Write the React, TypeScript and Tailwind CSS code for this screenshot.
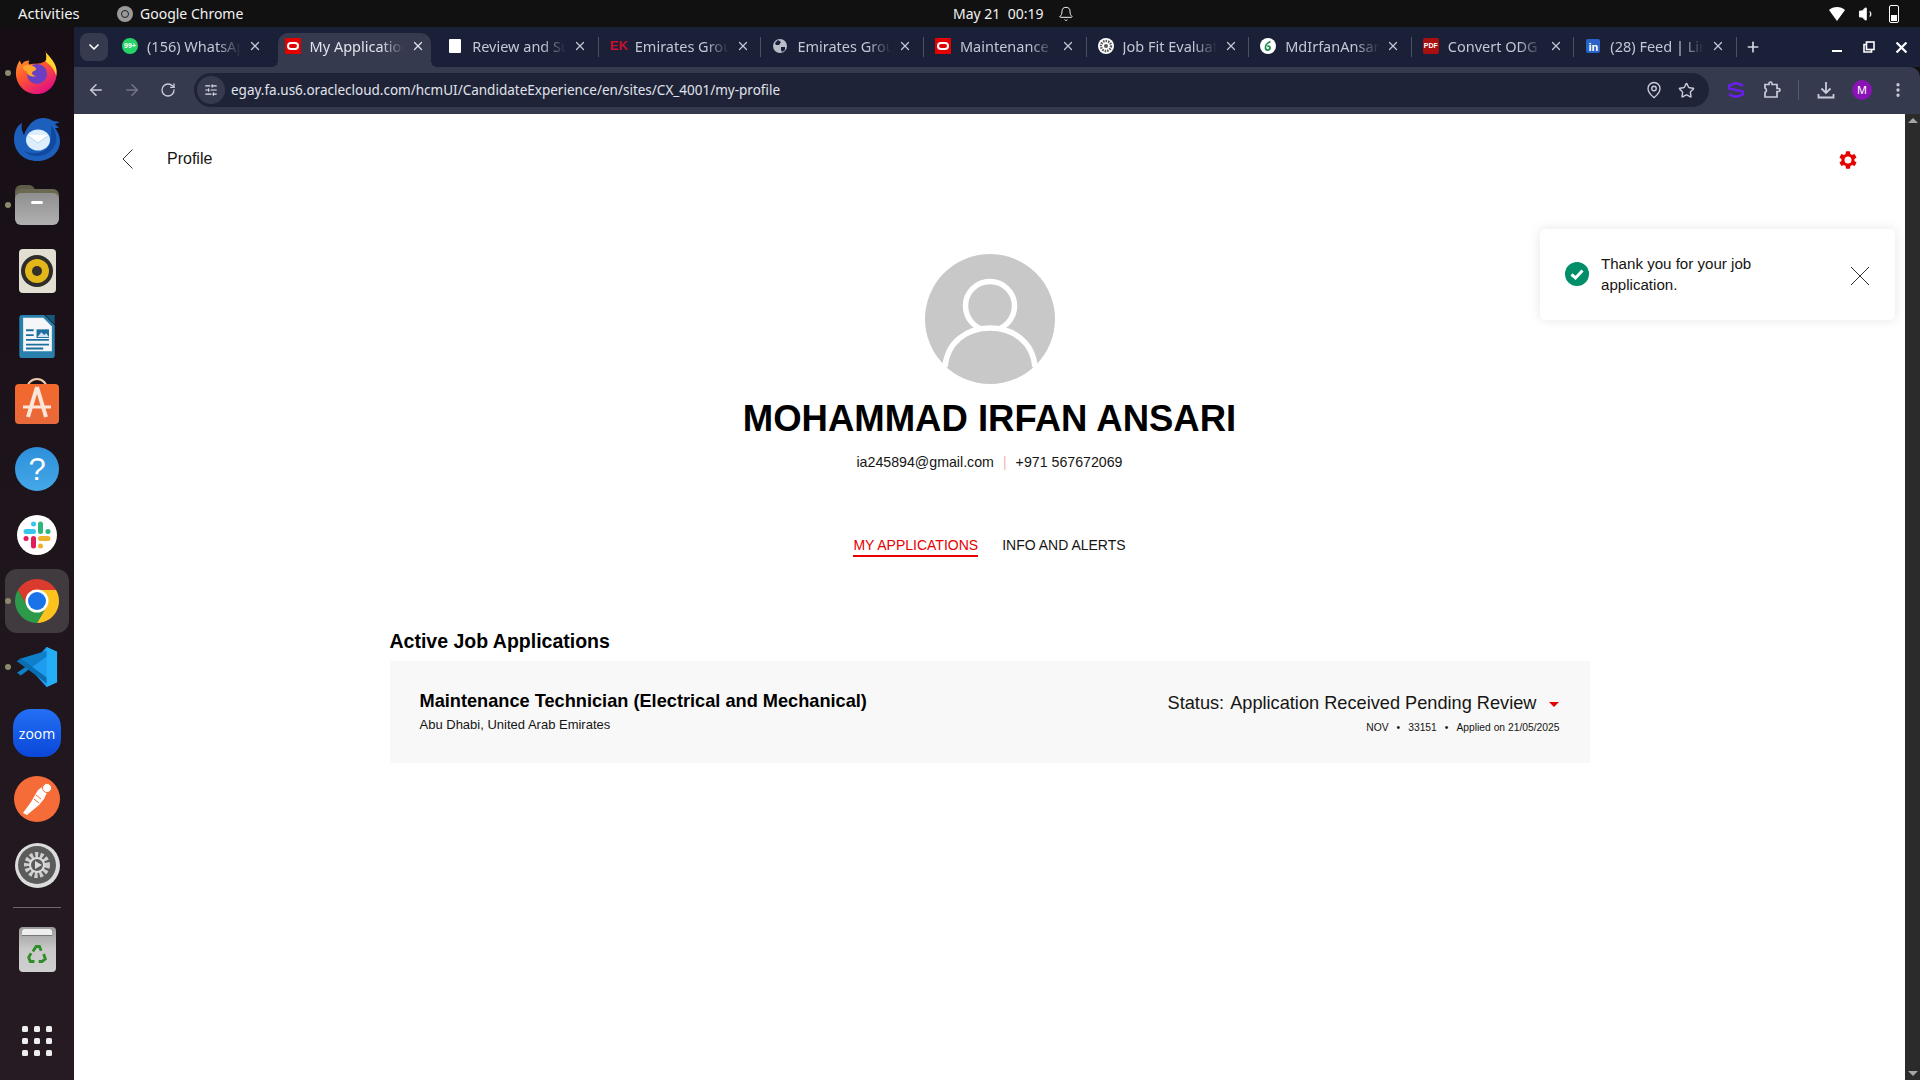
import { ReactNode } from "react"
import { X, Plus, ChevronDown, ArrowLeft, ArrowRight, RotateCw, MapPin, Star, EllipsisVertical, SlidersHorizontal, Bell, Volume1 } from "lucide-react"

const ubuntu = "[font-family:'Noto_Sans',sans-serif]"

const OracleIcon = () => (
    <div className="w-4 h-4 bg-[#e30000] flex items-center justify-center">
        <div className="w-3 h-2 rounded-full border-2 border-white" />
    </div>
)

const tabs: { title: string; icon: ReactNode; active?: boolean; noSep?: boolean }[] = [
    {
        title: "(156) WhatsApp",
        noSep: true,
        icon: (
            <div className="w-4 h-4 rounded-full bg-[#25d366] flex items-center justify-center text-[7px] font-bold text-white leading-none [font-family:'Liberation_Sans',sans-serif]">99+</div>
        ),
    },
    { title: "My Applications", icon: <OracleIcon />, active: true },
    { title: "Review and Submit", icon: <div className="w-3 h-3.5 mx-0.5 bg-white rounded-[1px]" /> },
    { title: "Emirates Group", icon: <div className="w-4 text-[13px] font-bold text-[#c8102e] leading-none [font-family:'Liberation_Sans',sans-serif]">EK</div> },
    {
        title: "Emirates Group",
        icon: (
            <svg viewBox="0 0 16 16" className="w-4 h-4">
                <circle cx="8" cy="8" r="7" fill="#b9bcc9" />
                <path d="M6 2 9 4 7 7 4 7 3 5ZM9 9l4 0 0 3-3 2-1-2Z" fill="#1a2038" />
            </svg>
        ),
    },
    { title: "Maintenance Technician", icon: <OracleIcon /> },
    {
        title: "Job Fit Evaluation",
        icon: (
            <svg viewBox="0 0 16 16" className="w-4 h-4">
                <circle cx="8" cy="8" r="8" fill="#fff" />
                <circle cx="8" cy="8" r="5" fill="none" stroke="#555" strokeWidth="2.4" strokeDasharray="1.5 1" />
                <circle cx="8" cy="8" r="2" fill="#555" />
            </svg>
        ),
    },
    {
        title: "MdIrfanAnsari",
        icon: (
            <svg viewBox="0 0 16 16" className="w-4 h-4">
                <circle cx="8" cy="8" r="8" fill="#fff" />
                <path d="M10.5 3.5C7 5 5 8 5.5 10.5c.4 2 3.6 2 4.4.2.6-1.6-.6-3-2.6-2.4" fill="none" stroke="#1f8a4c" strokeWidth="1.8" />
            </svg>
        ),
    },
    {
        title: "Convert ODG to PDF",
        icon: <div className="w-4 h-4 rounded-[2px] bg-[#a80f0f] flex items-center justify-center text-[7px] font-bold text-white leading-none [font-family:'Liberation_Sans',sans-serif]">PDF</div>,
    },
    {
        title: "(28) Feed | LinkedIn",
        icon: <div className="w-3.5 h-3.5 mx-px rounded-[2px] bg-[#2a62c9] flex items-end justify-center text-[11px] font-bold text-white leading-none [font-family:'Liberation_Sans',sans-serif]">in</div>,
    },
]

function Tab({ title, icon, active, noSep }: { title: string; icon: ReactNode; active?: boolean; noSep?: boolean }) {
    return (
        <div className={`relative h-[34px] shrink-0 flex items-center pl-[7px] pb-[9px] rounded-t-[10px] ${active ? "w-[153.6px] mr-[9px] bg-[#363a4f] text-[#e1e3ec]" : "w-[162.6px] text-[#c3c6d4]"}`}>
            <div className="w-4 h-4 shrink-0 flex items-center justify-center">{icon}</div>
            <div className="ml-[9px] w-[94px] shrink-0 overflow-hidden whitespace-nowrap text-[14.5px] leading-[20px] [mask-image:linear-gradient(to_right,black_75%,transparent)]">{title}</div>
            <X className="ml-[7px] w-3.5 h-3.5 shrink-0" strokeWidth={2.2} />
            {!active && !noSep && <div className="absolute right-[4px] top-[4px] h-[20px] w-px bg-[#4c5064]" />}
            {active && <div className="absolute -left-[6px] bottom-0 w-[6px] h-[6px] bg-[radial-gradient(circle_at_0_0,transparent_6px,#363a4f_6px)]" />}
            {active && <div className="absolute -right-[6px] bottom-0 w-[6px] h-[6px] bg-[radial-gradient(circle_at_100%_0,transparent_6px,#363a4f_6px)]" />}
        </div>
    )
}

function DockCell({ children, dot, active }: { children: ReactNode; dot?: boolean; active?: boolean }) {
    return (
        <div className="relative h-[66px] flex items-center justify-center">
            {active && <div className="absolute left-[5px] top-[1px] w-16 h-16 rounded-xl bg-[#413a3f]" />}
            {dot && <div className="absolute left-[5px] top-[30px] w-[6px] h-[6px] rounded-full bg-[#8a8a6c]" />}
            <div className="relative">{children}</div>
        </div>
    )
}

const Firefox = () => (
    <svg viewBox="0 0 48 48" className="w-[46px] h-[46px]">
        <defs>
            <linearGradient id="ff" x1="0" y1="0" x2="0.6" y2="1">
                <stop offset="0" stopColor="#ffb52e" />
                <stop offset="0.5" stopColor="#ff5a2c" />
                <stop offset="1" stopColor="#e3127f" />
            </linearGradient>
        </defs>
        <path d="M33 2c2 5 9 8 11 17 3 14-7 27-20 27C11 46 2 36 2 24c0-6 2-10 4-13l2 4c2-3 5-4 8-4-1 2-1 3 0 4 6-1 14 0 17-4 2-3 1-6 0-10Z" fill="url(#ff)" />
        <path d="M33 2c3 4 9 9 11 17 .6 3 .5 6 0 8-2-8-7-12-11-15 1-3 1-7 0-10Z" fill="#ffd52e" />
        <circle cx="24" cy="25" r="10.5" fill="#6b3fc4" />
        <path d="M9 18c4-4 9-3 13 0 2 2 1 3-1 4-4 1-2 5 2 5-5 2-10-1-10-5-2 0-3-2-4-4Z" fill="#ffa52e" />
    </svg>
)

const Thunderbird = () => (
    <svg viewBox="0 0 48 48" className="w-[48px] h-[48px]">
        <path d="M24 46C11 46 1 37 1 24 1 16 5 10 9 8c-1 5 0 9 2 12C14 11 21 2 31 3c5 .4 8 2 9 3l7 1-5 2 4 4-4 0c3 4 5 8 5 13 0 12-10 20-23 20Z" fill="#1c5fbd" />
        <path d="M38 10c4 5 6 10 5 17-2 8-9 14-19 14-6 0-10-2-13-5 3 1 6 2 11 2 9 0 16-6 16-14 0-6 0-10 0-14Z" fill="#0f4aa0" />
        <ellipse cx="25" cy="25" rx="12" ry="10.5" fill="#dcedfb" />
        <path d="M14 20 25 28 36 20" fill="#fff" stroke="#b5d6f2" strokeWidth="1" />
    </svg>
)

const Files = () => (
    <div className="relative w-11 h-10">
        <div className="absolute left-0 top-0 w-5 h-3 rounded-t-md bg-[#5e5c47]" />
        <div className="absolute left-0 top-1 w-11 h-3 rounded-t-md bg-[#6b6952]" />
        <div className="absolute left-0 top-2 w-11 h-8 rounded-md bg-linear-to-b from-[#8f8f8f] to-[#b1b1b1] flex justify-center">
            <div className="mt-[8px] w-3 h-[3px] rounded-sm bg-white" />
        </div>
    </div>
)

const Rhythmbox = () => (
    <div className="w-[37px] h-[44px] rounded-[4px] bg-[#e3ded2] flex items-center justify-center">
        <div className="w-[32px] h-[32px] rounded-full bg-[#2e2d2b] flex items-center justify-center">
            <div className="w-[24px] h-[24px] rounded-full bg-[#e3b71a] flex items-center justify-center">
                <div className="w-[10px] h-[10px] rounded-full bg-[#33302a]" />
            </div>
        </div>
    </div>
)

const Writer = () => (
    <svg viewBox="0 0 38 46" className="w-[37px] h-[44px]">
        <path d="M3 0H26L37 11V42a3 3 0 0 1-3 3H3a3 3 0 0 1-3-3V3a3 3 0 0 1 3-3Z" fill="#2a80ad" />
        <path d="M4 3H25L34 12V38H4Z" fill="#f4f6f7" />
        <path d="M27 0H37V10Z" fill="#18587e" />
        <path d="M7 16H15M7 21H15M7 26H31M7 31H31M7 35H25" stroke="#1f6f9e" strokeWidth="2" />
        <rect x="18" y="15" width="13" height="9" fill="#1f6f9e" />
        <path d="M19 23l4-5 3 3 2-2 3 4Z" fill="#cfe4f0" />
    </svg>
)

const AppCenter = () => (
    <div className="relative w-11 h-[46px] -mt-[5px]">
        <div className="absolute left-[11px] top-0 w-[22px] h-3 rounded-t-full border-2 border-b-0 border-[#f2c9a8]" />
        <div className="absolute left-0 top-[6px] w-11 h-10 rounded-[4px] bg-linear-to-b from-[#f4692c] to-[#e8693a]" />
        <svg viewBox="0 0 44 40" className="absolute left-0 top-[6px] w-11 h-10">
            <path d="M22 3 13 33M22 3 31 33" stroke="#fbe6da" strokeWidth="4" fill="none" />
            <path d="M8 23H36" stroke="#fbe6da" strokeWidth="3" />
        </svg>
    </div>
)

const Help = () => (
    <div className="w-11 h-11 rounded-full bg-linear-to-b from-[#2d8fd9] to-[#44a8e8] flex items-center justify-center text-white text-[31px] leading-none [font-family:'Liberation_Sans',sans-serif]">?</div>
)

const Slack = () => (
    <div className="w-10 h-10 rounded-full bg-white flex items-center justify-center">
        <svg viewBox="0 0 28 28" className="w-7 h-7">
            <g strokeLinecap="round" strokeWidth="5" fill="none">
                <path d="M3 10.5H10.5" stroke="#36c5f0" />
                <path d="M10.5 3V3.1" stroke="#36c5f0" />
                <path d="M17.5 3V10.5" stroke="#2eb67d" />
                <path d="M25 10.5H24.9" stroke="#2eb67d" />
                <path d="M17.5 17.5H25" stroke="#ecb22e" />
                <path d="M17.5 25V24.9" stroke="#ecb22e" />
                <path d="M10.5 17.5V25" stroke="#e01e5a" />
                <path d="M3 17.5H3.1" stroke="#e01e5a" />
            </g>
        </svg>
    </div>
)

const Chrome = () => (
    <svg viewBox="0 0 48 48" className="w-12 h-12">
        <path d="M43.05 13A22 22 0 0 0 4.95 13L14.47 29.5 24 24 24 13Z" fill="#db3a2e" />
        <path d="M43.05 13A22 22 0 0 1 24 46L33.53 29.5 24 24 24 13Z" fill="#fcc31e" />
        <path d="M24 46A22 22 0 0 1 4.95 13L14.47 29.5 24 24 33.53 29.5Z" fill="#2c9a48" />
        <circle cx="24" cy="24" r="11.5" fill="#fff" />
        <circle cx="24" cy="24" r="9" fill="#1a73e8" />
    </svg>
)

const VSCode = () => (
    <svg viewBox="0 0 44 44" className="w-[42px] h-[42px]">
        <path d="M32 1 43 6V38L32 43 13 22Z" fill="#1f9cf0" />
        <path d="M32 1 32 43 43 38V6Z" fill="#23aef5" />
        <path d="M5 13 1 16 10 22 1 28 5 31 32 11V5Z" fill="#0f7fc9" />
        <path d="M5 13 32 33V39L1 16Z" fill="#0a6db0" />
    </svg>
)

const Zoom = () => (
    <div className="w-12 h-12 rounded-[18px] bg-linear-to-b from-[#2470f5] to-[#0b46d8] flex items-center justify-center text-white text-[14px] font-medium [font-family:'Open_Sans',sans-serif]">zoom</div>
)

const Postman = () => (
    <div className="w-[46px] h-[46px] rounded-full bg-[#f66c38] flex items-center justify-center">
        <svg viewBox="0 0 46 46" className="w-[46px] h-[46px]">
            <path d="M9 37 13 39 25 29 30 23 35 12 31 9 24 14 17 26Z" fill="#fff" />
            <circle cx="33" cy="12" r="4.5" fill="#fff" stroke="#f66c38" strokeWidth="1" />
            <path d="M22 19 27 23M20 23 25 27" stroke="#f66c38" strokeWidth="1" />
        </svg>
    </div>
)

const Settings = () => (
    <div className="w-[45px] h-[45px] rounded-full bg-[#dcdcdc] flex items-center justify-center">
        <div className="w-[38px] h-[38px] rounded-full bg-[#5b5b5b] flex items-center justify-center">
            <svg viewBox="0 0 30 30" className="w-[30px] h-[30px]">
                <circle cx="15" cy="15" r="10" fill="none" stroke="#cfcfcf" strokeWidth="6" strokeDasharray="3 2" />
                <circle cx="15" cy="15" r="8" fill="#dcdcdc" />
                <circle cx="15" cy="15" r="6" fill="#5b5b5b" />
                <path d="M13 11 20 15 13 19Z" fill="#dcdcdc" />
            </svg>
        </div>
    </div>
)

const Trash = () => (
    <div className="w-[37px] h-[45px] rounded-[4px] bg-linear-to-b from-[#9a9a9a] via-[#c9c9c9] to-[#cfcfcf] flex flex-col items-center">
        <div className="mt-[2px] w-[30px] h-[7px] rounded-t-[3px] bg-[#eeeeee] border-b border-[#777]" />
        <svg viewBox="0 0 24 24" className="mt-[8px] w-[20px] h-[20px]" fill="none" stroke="#2f8f26" strokeWidth="3.4">
            <path d="M7 9 11 3 15 3 17 8M20 12 22 18 18 21 14 21M9 21 4 21 2 16 5 11" />
        </svg>
    </div>
)

const AppGrid = () => (
    <div className="grid grid-cols-3 gap-x-[6px] gap-y-[6px]">
        {[0, 1, 2, 3, 4, 5, 6, 7, 8].map((i) => (
            <div key={i} className="w-[6px] h-[6px] rounded-[1.5px] bg-[#eeeeee]" />
        ))}
    </div>
)

function Dock() {
    return (
        <div className="w-[74px] shrink-0 flex flex-col pt-[13px] bg-linear-to-b from-[#170e15] to-[#261b23]">
            <DockCell dot><Firefox /></DockCell>
            <DockCell><Thunderbird /></DockCell>
            <DockCell dot><Files /></DockCell>
            <DockCell><Rhythmbox /></DockCell>
            <DockCell><Writer /></DockCell>
            <DockCell><AppCenter /></DockCell>
            <DockCell><Help /></DockCell>
            <DockCell><Slack /></DockCell>
            <DockCell dot active><Chrome /></DockCell>
            <DockCell dot><VSCode /></DockCell>
            <DockCell><Zoom /></DockCell>
            <DockCell><Postman /></DockCell>
            <DockCell><Settings /></DockCell>
            <div className="mx-[13px] mt-[9px] mb-[8px] h-px bg-[#6e676c]" />
            <DockCell><Trash /></DockCell>
            <div className="mt-[44px] flex justify-center"><AppGrid /></div>
        </div>
    )
}

function TopBar() {
    return (
        <div className={`h-[27px] shrink-0 bg-[#111111] text-[#f2f2f2] text-[14px] flex items-center relative ${ubuntu}`}>
            <div className="ml-[18px] w-[99px] text-[14.8px]">Activities</div>
            <div className="w-4 h-4 rounded-full bg-[#9a9a9a] flex items-center justify-center">
                <div className="w-2 h-2 rounded-full border border-[#222]" />
            </div>
            <div className="ml-[7px]">Google Chrome</div>
            <div className="absolute left-[953px] flex items-center">
                <span>May 21&nbsp;&nbsp;00:19</span>
                <Bell className="ml-[15px] w-4 h-4" strokeWidth={1.5} />
            </div>
            <div className="ml-auto mr-[21px] flex items-center gap-[13px]">
                <svg viewBox="0 0 16 14" className="w-[16px] h-[14px]"><path d="M0 3C4-1 12-1 16 3L8 14Z" fill="#fff" /></svg>
                <Volume1 className="w-[18px] h-[18px]" fill="#fff" strokeWidth={1.5} />
                <div className="w-[10px] h-[18px] rounded-[2px] border border-white flex items-end p-px">
                    <div className="w-full h-[6px] bg-white" />
                </div>
            </div>
        </div>
    )
}

function TabStrip() {
    return (
        <div className={`h-[40px] shrink-0 bg-[#1a2038] flex items-end relative ${ubuntu}`}>
            <div className="ml-[6px] mb-[6px] w-7 h-7 rounded-lg bg-[#363a4f] flex items-center justify-center text-white">
                <ChevronDown className="w-4 h-4" strokeWidth={2.5} />
            </div>
            <div className="ml-[7px] flex">
                {tabs.map((t, i) => (
                    <Tab key={i} {...t} />
                ))}
            </div>
            <Plus className="ml-[4px] mb-[12px] w-4 h-4 text-[#d5d7e1]" strokeWidth={2.5} />
            <div className="ml-auto mb-[14px] flex items-center text-white">
                <div className="w-[10px] h-[2px] bg-white mt-[7px]" />
                <svg viewBox="0 0 12 12" className="ml-[21px] w-[12px] h-[12px]" fill="none" stroke="#fff" strokeWidth="1.6">
                    <rect x="3.5" y="1" width="7.5" height="7.5" />
                    <path d="M3.5 3.5H1V11H8.5V8.5" />
                </svg>
                <svg viewBox="0 0 10 10" className="ml-[21px] mr-[13px] w-[11px] h-[11px]" fill="none" stroke="#fff" strokeWidth="2">
                    <path d="M0.5 0.5 9.5 9.5M9.5 0.5 0.5 9.5" />
                </svg>
            </div>
        </div>
    )
}

function Toolbar() {
    return (
        <div className={`h-[47px] shrink-0 pb-[1px] bg-[#363a4f] rounded-tr-[10px] flex items-center text-[#c9ccd9] ${ubuntu}`}>
            <ArrowLeft className="ml-[13px] w-[18px] h-[18px]" strokeWidth={2} />
            <ArrowRight className="ml-[18px] w-[18px] h-[18px] text-[#747789]" strokeWidth={2} />
            <RotateCw className="ml-[19px] w-4 h-4" strokeWidth={2} />
            <div className="ml-[18px] w-[1515px] h-[34px] rounded-full bg-[#1e2337] flex items-center">
                <div className="ml-[3px] w-7 h-7 rounded-full bg-[#363a4f] flex items-center justify-center">
                    <SlidersHorizontal className="w-3.5 h-3.5 text-[#e1e3ec]" strokeWidth={2} />
                </div>
                <div className="ml-[6px] text-[13.5px] text-[#e1e3ec] whitespace-nowrap">egay.fa.us6.oraclecloud.com/hcmUI/CandidateExperience/en/sites/CX_4001/my-profile</div>
                <MapPin className="ml-auto w-[18px] h-[18px]" strokeWidth={1.8} />
                <Star className="ml-[15px] mr-[14px] w-[17px] h-[17px]" strokeWidth={2} />
            </div>
            <svg viewBox="0 0 16 16" className="ml-[19px] w-[16px] h-[16px]" fill="none" stroke="#6a1fe8" strokeWidth="2.6">
                <path d="M15 3.5 8 1 1 3.5V6.5L15 9.5V12.5L8 15 1 12.5" />
            </svg>
            <svg viewBox="0 0 18 18" className="ml-[19px] w-[18px] h-[18px]" fill="none" stroke="currentColor" strokeWidth="1.7">
                <path d="M2 3.5H6V2.5A1.5 1.5 0 0 1 9 2.5V3.5H14V7.5H15.5A1.5 1.5 0 0 1 15.5 10.5H14V16H2V11.5A2.5 2.5 0 0 0 2 7Z" />
            </svg>
            <div className="ml-[17px] w-px h-5 bg-[#55596c]" />
            <svg viewBox="0 0 18 18" className="ml-[18px] w-[18px] h-[18px]" fill="none" stroke="currentColor" strokeWidth="1.8">
                <path d="M9 1V12M4.5 7.5 9 12 13.5 7.5M1.5 13V16.5H16.5V13" />
            </svg>
            <div className="ml-[17px] w-5 h-5 rounded-full bg-[#8a13b5] text-white text-[11px] flex items-center justify-center">M</div>
            <EllipsisVertical className="ml-[17px] w-[18px] h-[18px]" strokeWidth={2.4} />
        </div>
    )
}

function Avatar() {
    return (
        <svg viewBox="0 0 130 130" className="w-[130px] h-[130px]">
            <circle cx="65" cy="65" r="65" fill="#c8c8c8" />
            <circle cx="65" cy="52" r="24.5" fill="#c8c8c8" stroke="#fff" strokeWidth="5.5" />
            <path d="M20 113C22 88 42 74 65 74S108 88 110 113" fill="#c8c8c8" stroke="#fff" strokeWidth="5.5" />
        </svg>
    )
}

function Toast() {
    return (
        <div className="absolute right-[10px] top-[115px] w-[355px] h-[91px] rounded-[5px] bg-white shadow-[0_0_12px_rgba(0,0,0,0.1)] flex items-center pl-[25px]">
            <svg viewBox="0 0 24 24" className="w-6 h-6 shrink-0 -mt-[2px]">
                <circle cx="12" cy="12" r="12" fill="#008f68" />
                <path d="M6.5 12.5 10.5 16 17.5 8.5" fill="none" stroke="#fff" strokeWidth="3" />
            </svg>
            <div className="ml-[12px] -mt-[2px] w-[175px] text-[15.1px] leading-[21px] text-[#161513]">Thank you for your job application.</div>
            <svg viewBox="0 0 18 18" className="ml-[75px] mt-[2px] w-[18px] h-[18px]" fill="none" stroke="#333" strokeWidth="1">
                <path d="M0 0 18 18M18 0 0 18" />
            </svg>
        </div>
    )
}

function Page() {
    return (
        <div className="relative flex-1 bg-white text-[#161513] [font-family:'Liberation_Sans',sans-serif] overflow-hidden">
            <div className="h-[90px] flex items-start pt-[33px]">
                <svg viewBox="0 0 11 20" className="ml-[48px] mt-[2px] w-[11px] h-[20px]" fill="none" stroke="#333" strokeWidth="1">
                    <path d="M10.5 0.5 1 10 10.5 19.5" />
                </svg>
                <div className="ml-[34px] text-[16px] leading-[24px]">Profile</div>
                <svg viewBox="0 0 24 24" className="ml-auto mr-[45px] mt-[1px] w-[24px] h-[24px]" fill="#e60000">
                    <path d="M19.4 13a7.5 7.5 0 0 0 0-2l2.1-1.6-2-3.5-2.5 1a7.5 7.5 0 0 0-1.7-1L15 3.2h-4l-.4 2.7a7.5 7.5 0 0 0-1.7 1l-2.5-1-2 3.5L6.5 11a7.5 7.5 0 0 0 0 2l-2.1 1.6 2 3.5 2.5-1a7.5 7.5 0 0 0 1.7 1l.4 2.7h4l.4-2.7a7.5 7.5 0 0 0 1.7-1l2.5 1 2-3.5ZM13 15.5a3.5 3.5 0 1 1 0-7 3.5 3.5 0 0 1 0 7Z" transform="translate(-1 0)" />
                </svg>
            </div>
            <div className="flex flex-col items-center">
                <div className="mt-[50px]"><Avatar /></div>
                <h1 className="mt-[14px] text-[36.5px] leading-[42px] font-bold text-black">MOHAMMAD IRFAN ANSARI</h1>
                <div className="mt-[13px] flex items-center text-[14.2px] leading-[18px]">
                    <span>ia245894@gmail.com</span>
                    <span className="mx-[9px] text-[#f5b5b5]">|</span>
                    <span>+971 567672069</span>
                </div>
                <div className="mt-[65px] flex gap-[24px] text-[14px] leading-[18px]">
                    <div className="text-[#e60000] border-b-2 border-[#e60000] pb-[1px]">MY APPLICATIONS</div>
                    <div>INFO AND ALERTS</div>
                </div>
            </div>
            <div className="mt-[72px] mx-auto w-[1200px]">
                <h2 className="text-[19.5px] leading-[24px] font-bold text-black">Active Job Applications</h2>
                <div className="mt-[8px] h-[102px] bg-[#f8f8f8] flex justify-between px-[30px] pt-[28px]">
                    <div>
                        <div className="text-[18.2px] leading-[24px] font-bold text-black">Maintenance Technician (Electrical and Mechanical)</div>
                        <div className="mt-[3px] text-[13px] leading-[18px]">Abu Dhabi, United Arab Emirates</div>
                    </div>
                    <div className="flex flex-col items-end pt-[2px]">
                        <div className="flex items-center text-[18.2px] leading-[24px]">
                            <span>Status:</span>
                            <span className="ml-[6px]">Application Received Pending Review</span>
                            <div className="ml-[12px] mr-[1px] mt-[2px] w-0 h-0 border-x-[5px] border-t-[5px] border-x-transparent border-t-[#e60000]" />
                        </div>
                        <div className="mt-[6px] flex text-[10.3px] leading-[14px]">
                            <span>NOV</span>
                            <span className="mx-[8px]">•</span>
                            <span>33151</span>
                            <span className="mx-[8px]">•</span>
                            <span>Applied on 21/05/2025</span>
                        </div>
                    </div>
                </div>
            </div>
            <Toast />
        </div>
    )
}

function Scrollbar() {
    return (
        <div className="w-[15px] shrink-0 bg-[#2b2b2b] flex flex-col items-center justify-between py-[4px]">
            <div className="w-0 h-0 border-x-[5px] border-b-[5px] border-x-transparent border-b-[#a5a5a5]" />
            <div className="w-0 h-0 border-x-[5px] border-t-[5px] border-x-transparent border-t-[#a5a5a5]" />
        </div>
    )
}

export default function App() {
    return (
        <div className="w-[1920px] h-[1080px] overflow-hidden flex flex-col bg-[#111111]">
            <TopBar />
            <div className="flex-1 flex min-h-0">
                <Dock />
                <div className="flex-1 flex flex-col min-w-0">
                    <TabStrip />
                    <Toolbar />
                    <div className="flex-1 flex min-h-0">
                        <Page />
                        <Scrollbar />
                    </div>
                </div>
            </div>
        </div>
    )
}
